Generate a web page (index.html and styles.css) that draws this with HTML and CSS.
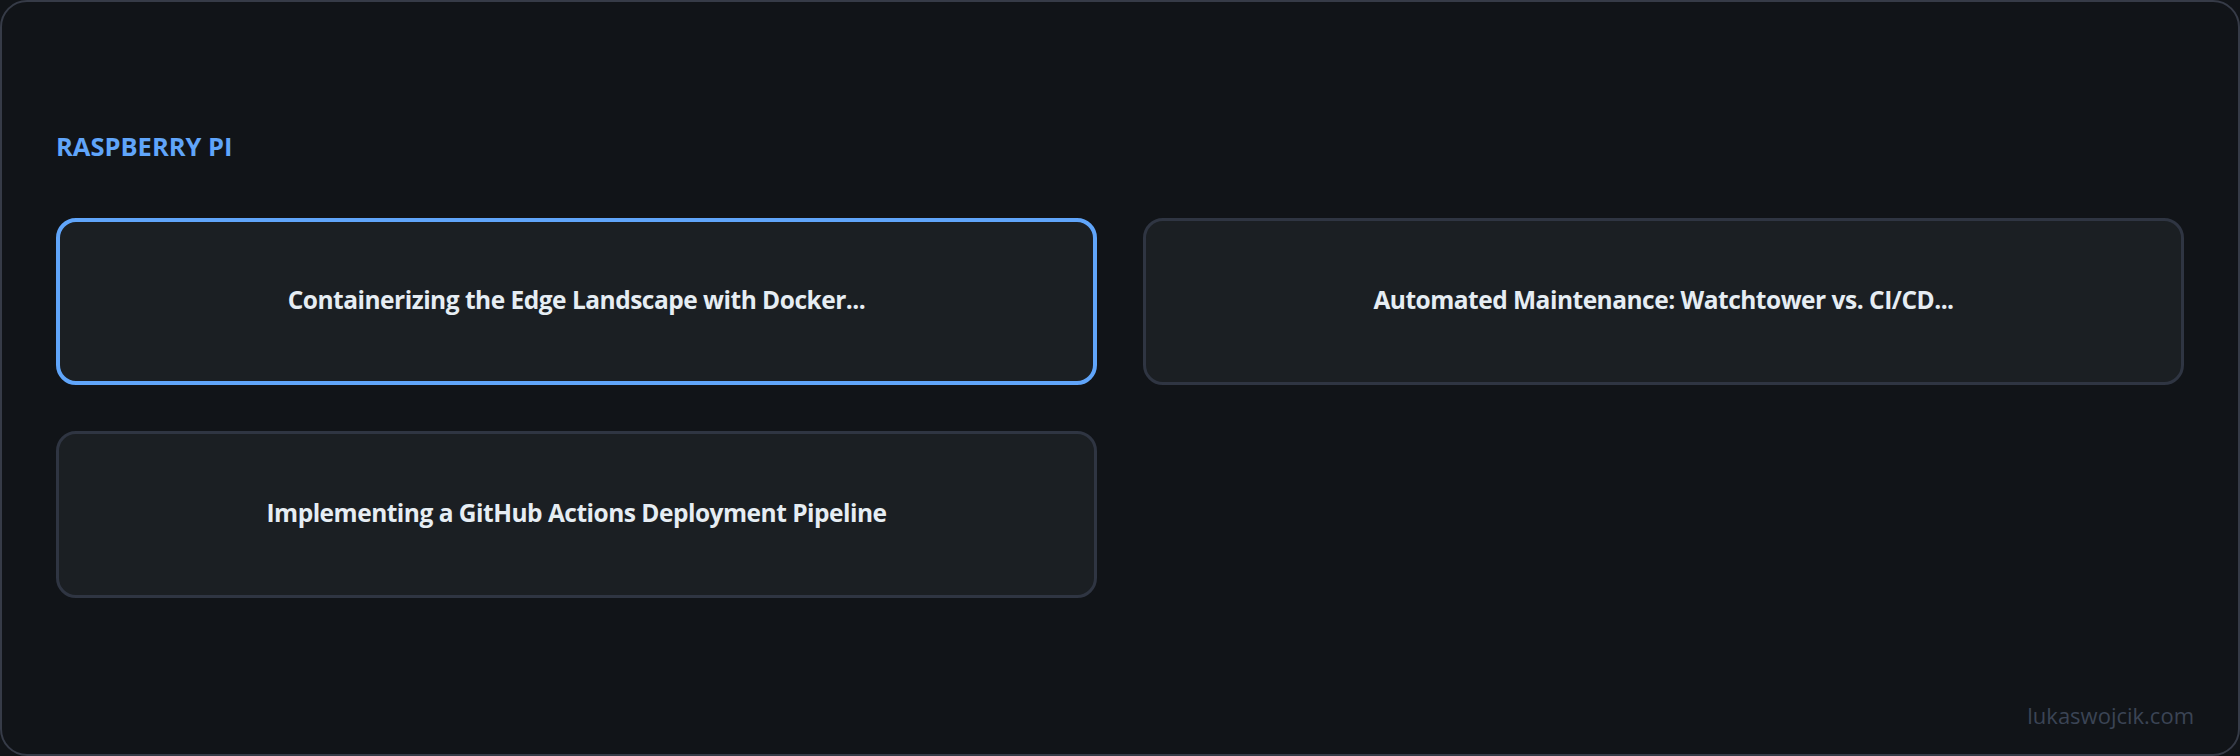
FILE: index.html
```html
<!DOCTYPE html>
<html lang="en">
<head>
  <meta charset="UTF-8">
  <title>Raspberry Pi | Posts</title>
  <meta name="viewport" content="width=device-width, initial-scale=1.0">
  <link rel="stylesheet" href="styles.css">
</head>
<body>

  <div class="frame">

    <!-- Category -->
    <h3 class="category">RASPBERRY PI</h3>

    <!-- Post cards -->
    <div class="posts">
      <a class="post active" href="#">Containerizing the Edge Landscape with Docker...</a>
      <a class="post" href="#">Automated Maintenance: Watchtower vs. CI/CD...</a>
      <a class="post" href="#">Implementing a GitHub Actions Deployment Pipeline</a>
    </div>

    <div class="footer">lukaswojcik.com</div>
  </div>

</body>
</html>
```

FILE: styles.css
```css
html, body {
  margin: 0;
  height: 100%;
  background: #111418;
}

body {
  font-family: 'Open Sans', 'Noto Sans', sans-serif;
}

.frame {
  box-sizing: border-box;
  height: 756px;
  display: flex;
  flex-direction: column;
  padding: 0 54px 0 54px;
  background: #111418;
  border: 2px solid #363b47;
  border-radius: 27px;
}

.category {
  margin: 128px 0 0 0;
  font-size: 25.5px;
  line-height: 32px;
  font-weight: 700;
  color: #60a5fa;
}

.posts {
  display: grid;
  grid-template-columns: 1fr 1fr;
  gap: 46px;
  margin-top: 56px;
}

.post {
  box-sizing: border-box;
  height: 167px;
  display: flex;
  align-items: center;
  justify-content: center;
  padding-bottom: 4px;
  background: #1b1f23;
  border: 3px solid #2f3542;
  border-radius: 20px;
  color: #e6edf3;
  font-size: 24.5px;
  letter-spacing: -0.5px;
  font-weight: 700;
  text-decoration: none;
}

.post.active {
  border: 4px solid #60a5fa;
}

.footer {
  margin-top: auto;
  margin-bottom: 24px;
  margin-right: -10px;
  text-align: right;
  font-size: 22px;
  color: #3b4455;
}
```
